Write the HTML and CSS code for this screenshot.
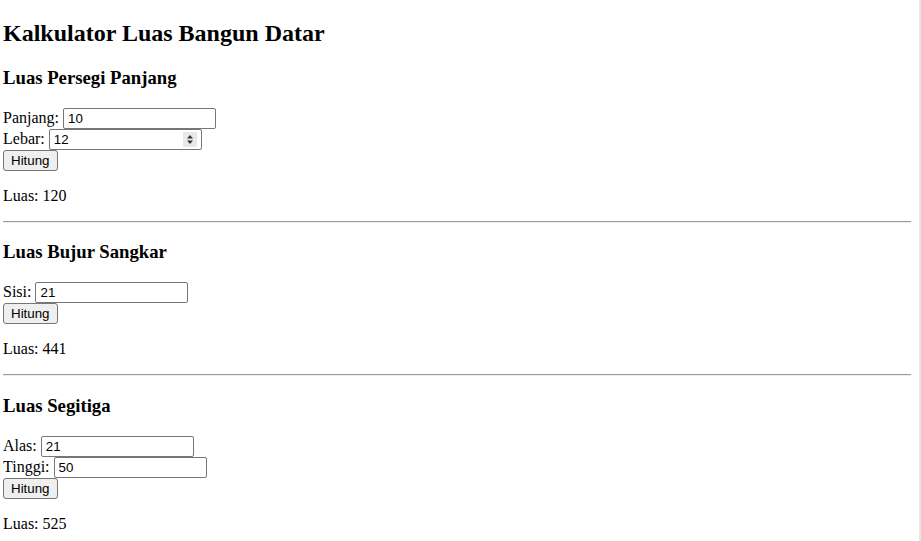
FILE: index.html
```html
<!DOCTYPE html>
<html>
<head>
<meta charset="utf-8">
<title>Kalkulator Luas Bangun Datar</title>
<link rel="stylesheet" href="styles.css">
</head>
<body>
<main class="page">
<h1 class="title">Kalkulator Luas Bangun Datar</h1>

<section class="calc">
<h3 class="calc-title">Luas Persegi Panjang</h3>
<label class="field">Panjang: <input class="inp" type="text" value="10"></label><br>
<label class="field">Lebar: <span class="num-wrap"><input class="inp inp-num" type="text" value="12"><span class="spin"><svg width="14" height="15" viewBox="0 0 14 15"><path d="M4 6.5 L7 3 L10 6.5 Z M4 8.5 L7 12 L10 8.5 Z" fill="#333"/></svg></span></span></label><br>
<button class="btn">Hitung</button>
<p class="result">Luas: 120</p>
</section>
<hr class="sep">

<section class="calc">
<h3 class="calc-title">Luas Bujur Sangkar</h3>
<label class="field">Sisi: <input class="inp" type="text" value="21"></label><br>
<button class="btn">Hitung</button>
<p class="result">Luas: 441</p>
</section>
<hr class="sep">

<section class="calc">
<h3 class="calc-title">Luas Segitiga</h3>
<label class="field">Alas: <input class="inp" type="text" value="21"></label><br>
<label class="field">Tinggi: <input class="inp" type="text" value="50"></label><br>
<button class="btn">Hitung</button>
<p class="result">Luas: 525</p>
</section>
</main>
</body>
</html>
```
FILE: styles.css
```css
html {
  border-right: 2px solid #e6e6e6;
  background: #fff;
}
body {
  margin: 3px 8px 8px 3px;
  font-family: "Liberation Serif", "Times New Roman", serif;
  font-size: 16px;
  color: #000;
}
.page {
  display: block;
}
.title {
  font-size: 24px;
  margin: 17px 0 19.92px;
}
.calc-title {
  font-size: 1.17em;
  margin: 1em 0;
}
.inp {
  font-family: "Liberation Sans", Arial, sans-serif;
  font-size: 13.33px;
  width: 153px;
  height: 21px;
  box-sizing: border-box;
  border: 1px solid #767676;
  border-radius: 2px;
  padding: 1px 4px;
  margin: 0;
  color: #000;
}
.num-wrap {
  position: relative;
  display: inline-block;
}
.inp-num {
  padding-right: 20px;
}
.spin {
  position: absolute;
  right: 5px;
  top: 3px;
  width: 14px;
  height: 15px;
  background: #e8e8e8;
  display: block;
}
.spin svg {
  display: block;
}
.btn {
  font-family: "Liberation Sans", Arial, sans-serif;
  font-size: 13.33px;
  height: 21px;
  padding: 1px 7px;
  border: 1px solid #767676;
  border-radius: 3px;
  background: #efefef;
  color: #000;
  margin: 0;
}
.result {
  margin: 16px 0;
}
.sep {
  margin: 8px 0;
  border: 0;
  border-top: 1px solid #9a9a9a;
  border-bottom: 1px solid #eee;
}
```
